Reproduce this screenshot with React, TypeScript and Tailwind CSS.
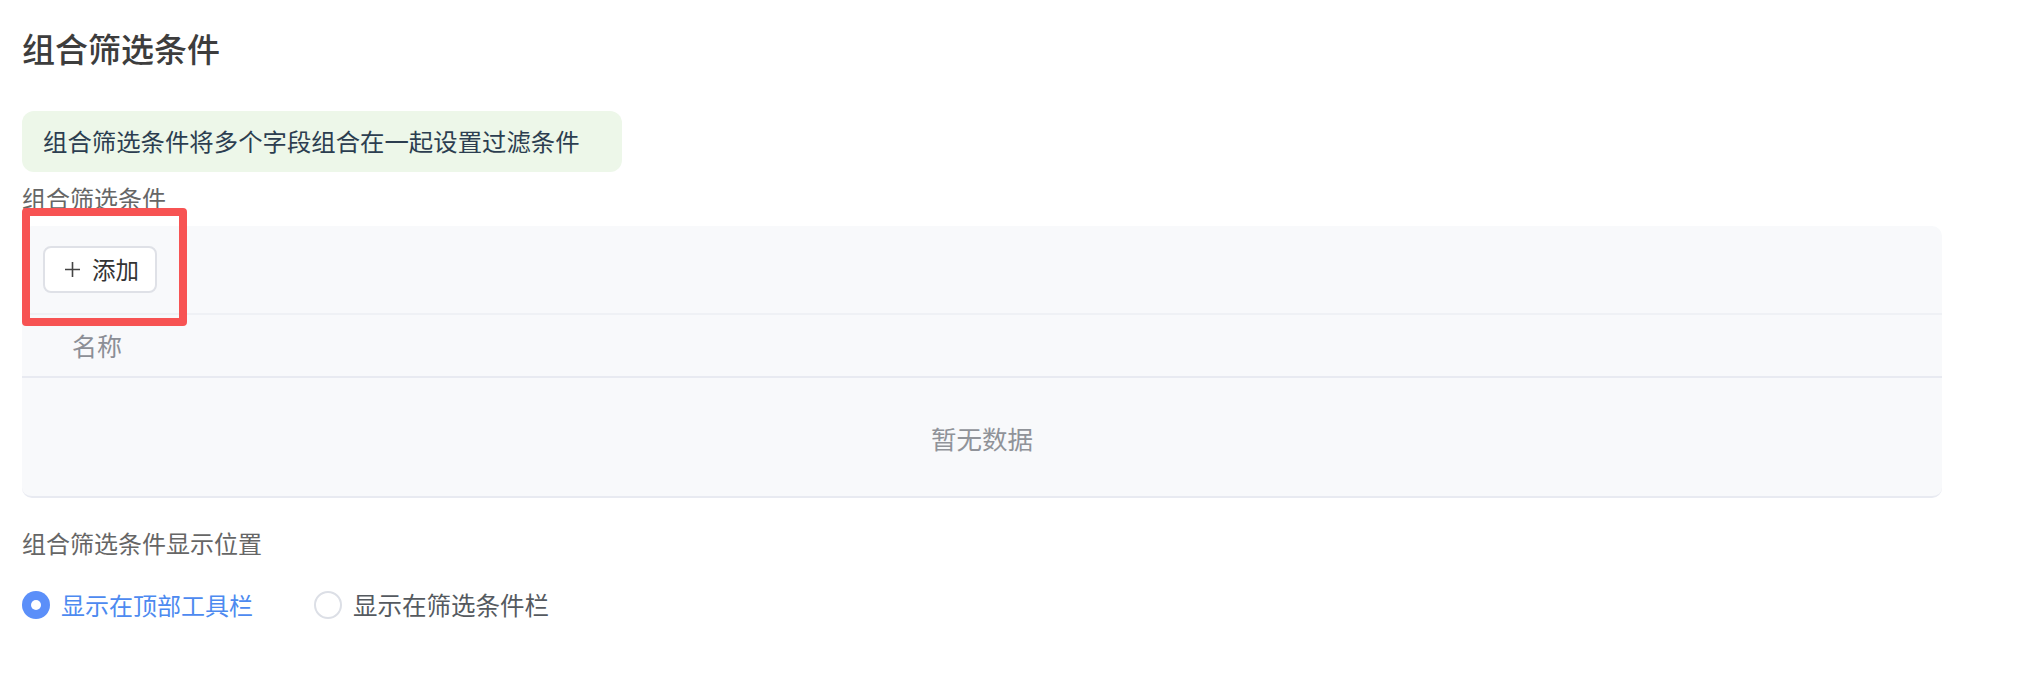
import React from 'react'

const FONT = "font-['Noto_Sans_CJK_SC','Noto_Sans',sans-serif]"

const Radio = ({ checked, label }: { checked?: boolean; label: string }) => (
  <label className="flex items-center gap-[11px] h-[30px] cursor-pointer">
    {checked ? (
      <span className="w-[28px] h-[28px] rounded-full bg-[#5b8ff9] flex items-center justify-center">
        <span className="w-[10px] h-[10px] rounded-full bg-white" />
      </span>
    ) : (
      <span className="w-[28px] h-[28px] rounded-full border-2 border-[#dcdfe6] bg-white" />
    )}
    <span className={checked ? 'text-[24px] text-[#4d8af0]' : 'text-[24.5px] text-[#555a60]'}>{label}</span>
  </label>
)

export default function App() {
  return (
    <div className={`relative w-[2018px] h-[676px] bg-white pl-[22px] pt-[24px] ${FONT}`}>
      <h1 className="h-[48px] text-[33px] leading-[48px] font-medium text-[#3d3d3d]">组合筛选条件</h1>

      <div className="mt-[39px] flex items-center w-[600px] h-[61px] pl-[21px] rounded-[12px] bg-[#edf7e9] text-[24.4px] text-[#2c3e50]">
        组合筛选条件将多个字段组合在一起设置过滤条件
      </div>

      <div className="mt-[11px] h-[30px] leading-[30px] text-[24px] text-[#666]">组合筛选条件</div>

      <div className="mt-[13px] w-[1920px] rounded-[10px] bg-[#f8f9fb] border-b-2 border-[#e8eaf1]">
        <div className="h-[89px] px-[21px] flex items-center border-b-2 border-[#eff1f5]">
          <button className="flex items-center gap-[12px] w-[114px] h-[47px] pl-[20px] rounded-[8px] border-2 border-[#dfe1e7] bg-white text-[23.5px] text-[#333]">
            <svg width="15" height="15" viewBox="0 0 15 15" fill="none" stroke="#444" strokeWidth="1.6">
              <path d="M7.5 0v15M0 7.5h15" />
            </svg>
            <span>添加</span>
          </button>
        </div>
        <div className="h-[63px] pl-[50px] flex items-center border-b-2 border-[#e8eaf1] text-[25px] text-[#8c8f96]">
          名称
        </div>
        <div className="h-[118px] pt-[2px] flex items-center justify-center text-[25.5px] text-[#909399]">暂无数据</div>
      </div>

      <div className="mt-[30px] h-[30px] leading-[30px] text-[24px] text-[#666]">组合筛选条件显示位置</div>

      <div className="mt-[32px] flex items-center gap-[61px]">
        <Radio checked label="显示在顶部工具栏" />
        <Radio label="显示在筛选条件栏" />
      </div>

      <div className="absolute left-[22px] top-[208px] w-[165px] h-[118px] border-[8px] border-[#f75353] rounded-[4px] pointer-events-none" />
    </div>
  )
}
